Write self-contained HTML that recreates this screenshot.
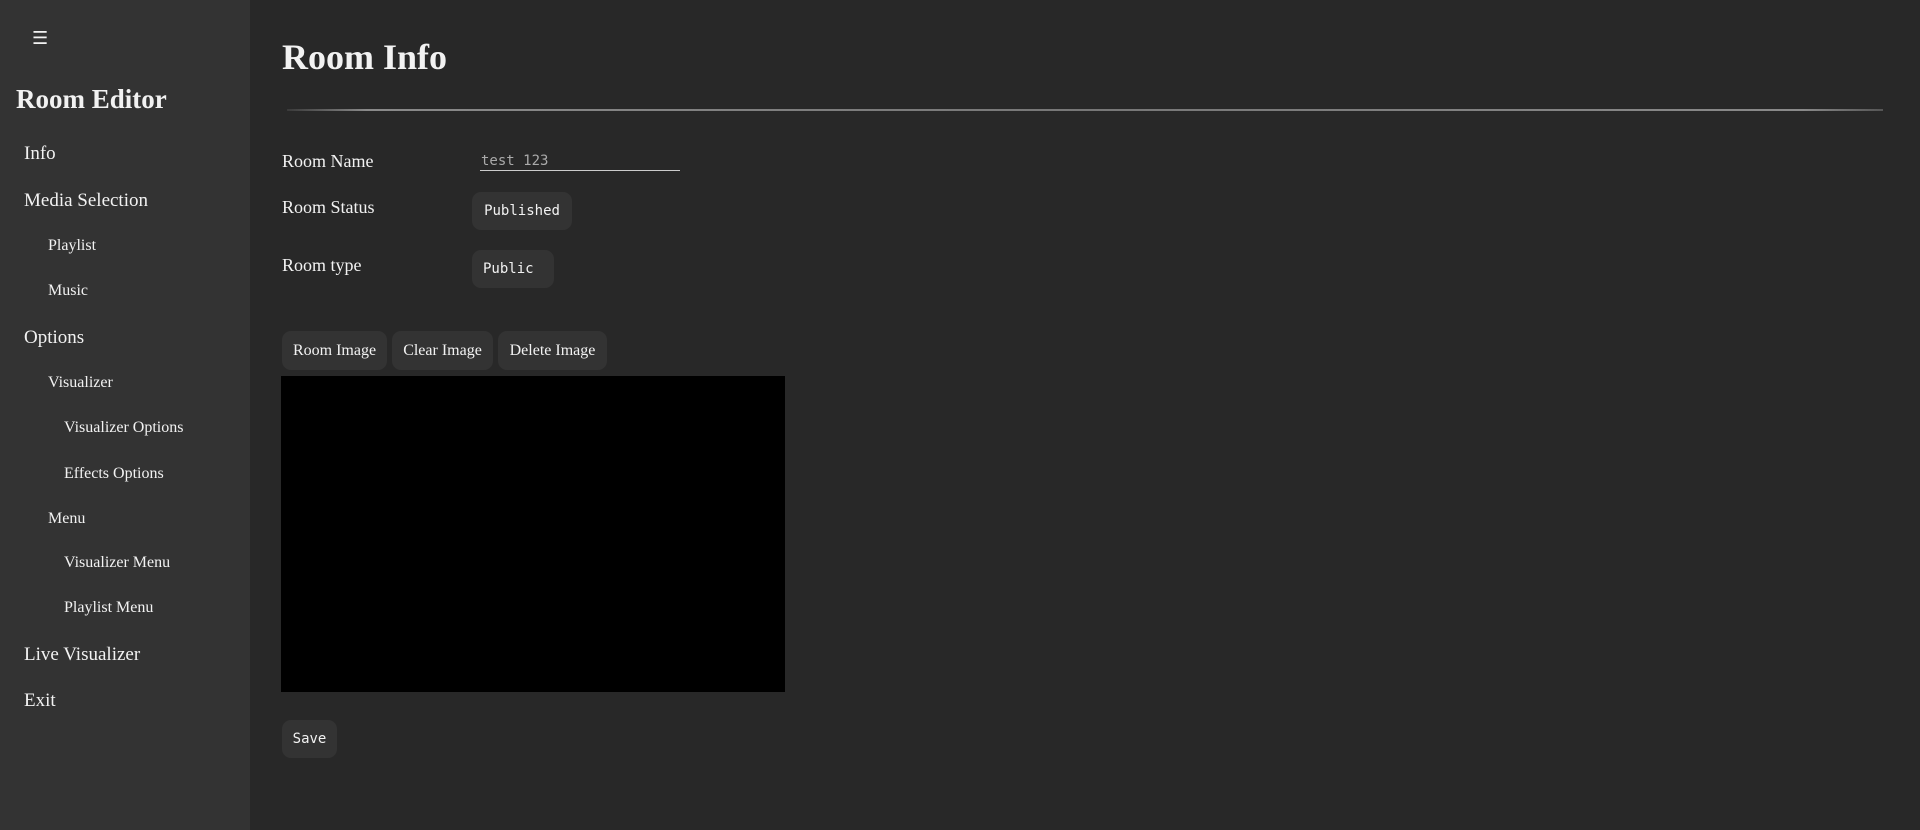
<!DOCTYPE html>
<html><head><meta charset="utf-8"><style>
*{margin:0;padding:0;box-sizing:border-box}
body{width:1920px;height:830px;background:#282828;color:#f2f2f2;font-family:"Liberation Serif",serif;position:relative;overflow:hidden}
#side{position:absolute;left:0;top:0;width:250px;height:830px;background:#333}
.a{position:absolute;white-space:nowrap;line-height:1}
.t1{font-size:19px}
.t2{font-size:16px}
.mono{font-family:"DejaVu Sans Mono","Liberation Mono",monospace}
.btn{position:absolute;background:#333;border-radius:9px;display:flex;align-items:center;justify-content:center;white-space:nowrap}
</style></head><body>
<div id="side">
<div class="a" style="left:32px;top:30px;font-size:18px;font-family:'DejaVu Sans',sans-serif">☰</div>
<div class="a" style="left:16px;top:86px;font-size:27px;font-weight:bold">Room Editor</div>
<div class="a t1" style="left:24px;top:144px">Info</div>
<div class="a t1" style="left:24px;top:191px">Media Selection</div>
<div class="a t2" style="left:48px;top:238px">Playlist</div>
<div class="a t2" style="left:48px;top:283px">Music</div>
<div class="a t1" style="left:24px;top:328px">Options</div>
<div class="a t2" style="left:48px;top:375px">Visualizer</div>
<div class="a t2" style="left:64px;top:420px">Visualizer Options</div>
<div class="a t2" style="left:64px;top:466px">Effects Options</div>
<div class="a t2" style="left:48px;top:511px">Menu</div>
<div class="a t2" style="left:64px;top:555px">Visualizer Menu</div>
<div class="a t2" style="left:64px;top:600px">Playlist Menu</div>
<div class="a t1" style="left:24px;top:645px">Live Visualizer</div>
<div class="a t1" style="left:24px;top:691px">Exit</div>
</div>
<div class="a" style="left:282px;top:39px;font-size:36px;font-weight:bold">Room Info</div>
<div style="position:absolute;left:287px;top:109px;width:1596px;height:2px;background:linear-gradient(90deg,#3a3a3a,#8a8a8a 5%,#777 50%,#8a8a8a 95%,#555)"></div>
<div class="a" style="left:282px;top:152px;font-size:18px">Room Name</div>
<div class="a mono" style="left:481px;top:154px;font-size:14px;color:#aaa">test 123</div>
<div style="position:absolute;left:480px;top:170px;width:200px;height:1px;background:#ccc"></div>
<div class="a" style="left:282px;top:198px;font-size:18px">Room Status</div>
<div class="btn mono" style="left:472px;top:192px;width:100px;height:38px;font-size:14px">Published</div>
<div class="a" style="left:282px;top:256px;font-size:18px">Room type</div>
<div class="btn mono" style="left:472px;top:250px;width:82px;height:38px;font-size:14px;justify-content:flex-start;padding-left:11px">Public</div>
<div class="btn" style="left:282px;top:331px;width:105px;height:39px;font-size:16px">Room Image</div>
<div class="btn" style="left:392px;top:331px;width:101px;height:39px;font-size:16px">Clear Image</div>
<div class="btn" style="left:498px;top:331px;width:109px;height:39px;font-size:16px">Delete Image</div>
<div style="position:absolute;left:281px;top:376px;width:504px;height:316px;background:#000"></div>
<div class="btn mono" style="left:282px;top:720px;width:55px;height:38px;font-size:14px">Save</div>
</body></html>
